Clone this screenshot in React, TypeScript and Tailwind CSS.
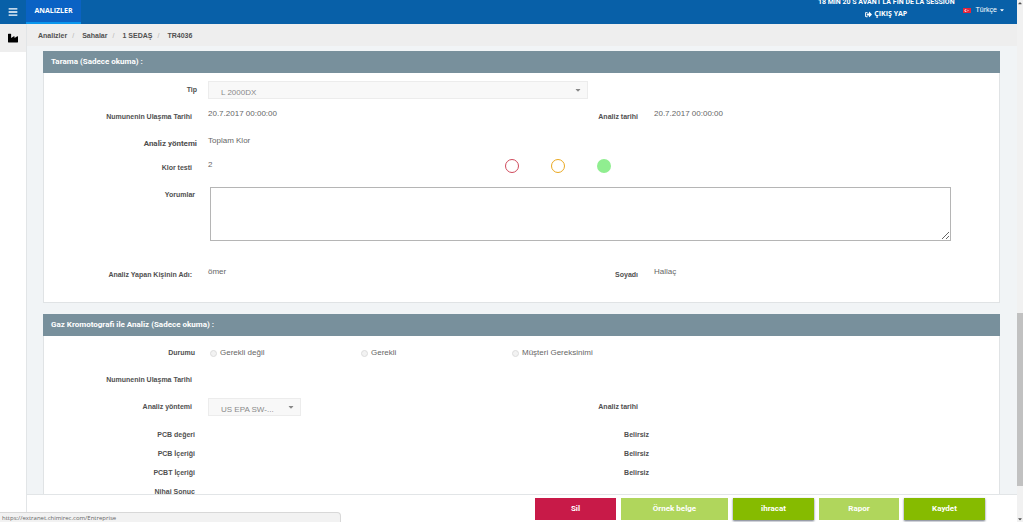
import type { ReactNode } from "react";
import { FaBars, FaCaretDown, FaCaretUp, FaIndustry, FaSignOutAlt } from "react-icons/fa";

const crumbs = ["Analizler", "Sahalar", "1 SEDAŞ", "TR4036"];

const actions = [
  { label: "Sil", style: "w-[81px] bg-[#c81a48]" },
  { label: "Örnek belge", style: "w-[107px] bg-[#b0d65c]" },
  { label: "ihracat", style: "w-[81px] bg-[#86bb00] shadow-xs shadow-gray-500" },
  { label: "Rapor", style: "w-20 bg-[#b0d65c]" },
  { label: "Kaydet", style: "w-[81px] bg-[#86bb00] shadow-xs shadow-gray-500" },
];

const labelBase = "block whitespace-nowrap pt-2 text-right font-bold leading-3 text-[#505050]";

function Row({ className, children }: { className: string; children: ReactNode }) {
  return (
    <div className={`grid grid-cols-[164fr_380fr_66fr_345fr] items-start ${className}`}>{children}</div>
  );
}

function Value({ children }: { children?: ReactNode }) {
  return <span className="pt-[5px] text-[8px] leading-3">{children}</span>;
}

function Panel({ title, className, children }: { title: string; className: string; children: ReactNode }) {
  return (
    <section className={`flex flex-col ${className}`}>
      <h2 className="h-[22px] shrink-0 bg-[#78909c] pl-2 font-['Roboto',Arial,sans-serif] text-[8px] font-bold leading-[22px] text-white">
        {title}
      </h2>
      <div className="flex-1 border border-t-0 border-[#e0e3e5] bg-white pt-[3px]">{children}</div>
    </section>
  );
}

function Picker({ id, text, width }: { id: string; text: string; width: string }) {
  return (
    <div className={`relative mt-[5px] ${width}`}>
      <select
        id={id}
        disabled
        className="block h-[18px] w-full appearance-none border border-[#ececec] bg-[#f8f8f8] pl-3 pt-[5px] text-[8px] leading-3 text-[#8a8a8a] opacity-100"
      >
        <option>{text}</option>
      </select>
      <FaCaretDown className="pointer-events-none absolute right-[6px] top-[5px] size-2 text-[#888]" />
    </div>
  );
}

function Status({ id, text }: { id: string; text: string }) {
  return (
    <label htmlFor={id} className="flex w-[151px] shrink-0 items-center gap-[3px] pl-[2px] text-[8px] leading-3">
      <input
        id={id}
        type="radio"
        name="durum"
        disabled
        className="size-[7px] appearance-none rounded-full border border-[#dcdcdc] bg-[#f2f2f2]"
      />
      {text}
    </label>
  );
}

export default function App() {
  return (
    <div className="relative flex h-screen overflow-hidden bg-[#f1f4f6] font-['Liberation_Sans',Arial,sans-serif] text-[7px] text-[#666]">
      <div className="flex min-w-0 flex-1 flex-col">
        <header className="flex h-6 shrink-0 bg-[#0860a8] text-white">
          <button aria-label="Menü" className="flex w-[26px] items-center justify-center">
            <FaBars className="size-[10px]" />
          </button>
          <a
            href="#analizler"
            className="flex w-[55px] items-center justify-center border-b-2 border-[#0a96ec] bg-[#0a62c4] font-['Open_Sans',sans-serif] font-bold"
          >
            ANALIZLER
          </a>
          <div className="flex flex-1 justify-end pr-3">
            <div className="-mt-1 flex flex-col items-center whitespace-nowrap font-bold leading-3">
              <span className="font-['Roboto',sans-serif]">18 MIN 20 S AVANT LA FIN DE LA SESSION</span>
              <a href="#cikis" className="flex items-center gap-[2px] font-['Open_Sans',sans-serif]">
                <FaSignOutAlt className="size-[7px]" />
                ÇIKIŞ YAP
              </a>
            </div>
            <button className="ml-2 flex h-5 items-center">
              <svg viewBox="0 0 16 10" className="h-[5px] w-2">
                <rect width="16" height="10" fill="#e5243b" />
                <circle cx="6" cy="5" r="3" fill="#fff" />
                <circle cx="7" cy="5" r="2.3" fill="#e5243b" />
                <path d="M8.5 5l3-1.2-.8 1.2.8 1.2z" fill="#fff" />
              </svg>
              <span className="ml-[5px]">Türkçe</span>
              <FaCaretDown className="ml-[2px] size-[6px]" />
            </button>
          </div>
        </header>

        <div className="flex min-h-0 flex-1">
          <aside className="w-[27px] shrink-0 border-r border-[#e2e5e7] bg-white">
            <a
              href="#sahalar"
              aria-label="Sahalar"
              className="flex h-7 items-center justify-center bg-[#eeeeee] text-black"
            >
              <FaIndustry className="size-[10px]" />
            </a>
          </aside>

          <div className="flex min-w-0 flex-1 flex-col">
            <nav className="flex h-[22px] shrink-0 items-center bg-[#eeeeee] pl-[11px] pt-[2px] font-bold text-[#505050]">
              {crumbs.map((crumb, i) => (
                <span key={crumb} className="flex">
                  {i > 0 && <span className="w-[15px] pl-[5px] font-normal text-[#b5b5b5]">/</span>}
                  <a href={`#${i}`}>{crumb}</a>
                </span>
              ))}
            </nav>

            <main className="flex min-h-0 flex-1 flex-col gap-[11px] overflow-hidden pl-4 pr-[17px] pt-[5px]">
              <Panel title="Tarama (Sadece okuma) :" className="shrink-0">
                <Row className="h-[27px]">
                  <label htmlFor="tip" className={`${labelBase} pr-[11px]`}>Tip</label>
                  <Picker id="tip" text="L 2000DX" width="w-full" />
                </Row>
                <Row className="h-[27px]">
                  <span className={`${labelBase} pr-4`}>Numunenin Ulaşma Tarihi</span>
                  <Value>20.7.2017 00:00:00</Value>
                  <span className={`${labelBase} pr-4`}>Analiz tarihi</span>
                  <Value>20.7.2017 00:00:00</Value>
                </Row>
                <Row className="h-6">
                  <span className={`${labelBase} pr-[11px] font-['Roboto',Arial,sans-serif] text-[8px]`}>
                    Analiz yöntemi
                  </span>
                  <Value>Toplam Klor</Value>
                </Row>
                <Row className="h-[27px]">
                  <span className={`${labelBase} pr-4`}>Klor testi</span>
                  <Value>2</Value>
                  <div className="col-span-2 -ml-[83px] flex gap-8 pt-[5px]">
                    <span className="size-[14px] rounded-full border border-[#d04a5c]" />
                    <span className="size-[14px] rounded-full border border-[#eaa820]" />
                    <span className="size-[14px] rounded-full bg-[#90ee90]" />
                  </div>
                </Row>
                <Row className="h-20">
                  <label htmlFor="yorumlar" className={`${labelBase} pr-[13px]`}>Yorumlar</label>
                  <div className="col-span-3 pl-[2px] pr-12 pt-[6px]">
                    <textarea id="yorumlar" className="block h-[54px] w-full border border-[#b5b5b5] bg-white" />
                  </div>
                </Row>
                <Row className="h-[41px]">
                  <span className={`${labelBase} pr-4`}>Analiz Yapan Kişinin Adı:</span>
                  <Value>ömer</Value>
                  <span className={`${labelBase} pr-4`}>Soyadı</span>
                  <Value>Hallaç</Value>
                </Row>
              </Panel>

              <Panel title="Gaz Kromotografi ile Analiz (Sadece okuma) :" className="flex-1">
                <Row className="h-[27px]">
                  <span className={`${labelBase} pr-[13px]`}>Durumu</span>
                  <div className="col-span-3 flex pt-2">
                    <Status id="gerekli-degil" text="Gerekli değil" />
                    <Status id="gerekli" text="Gerekli" />
                    <Status id="musteri" text="Müşteri Gereksinimi" />
                  </div>
                </Row>
                <Row className="h-[27px]">
                  <span className={`${labelBase} pr-4`}>Numunenin Ulaşma Tarihi</span>
                </Row>
                <Row className="h-7">
                  <label htmlFor="yontem" className={`${labelBase} pr-4`}>Analiz yöntemi</label>
                  <Picker id="yontem" text="US EPA SW-..." width="w-[93px]" />
                  <span className={`${labelBase} pr-4`}>Analiz tarihi</span>
                </Row>
                {["PCB değeri", "PCB İçeriği", "PCBT İçeriği"].map((name) => (
                  <Row key={name} className="h-[19px]">
                    <span className={`${labelBase} pr-[13px]`}>{name}</span>
                    <span />
                    <span className={`${labelBase} pr-[5px]`}>Belirsiz</span>
                  </Row>
                ))}
                <Row className="h-[17px] overflow-hidden">
                  <span className={`${labelBase} pr-[13px]`}>Nihai Sonuç</span>
                </Row>
              </Panel>
            </main>

            <footer className="flex h-7 shrink-0 items-start justify-end gap-[5px] border-t border-[#e2e5e7] bg-white pr-8 pt-[3px]">
              {actions.map(({ label, style }) => (
                <button
                  key={label}
                  className={`h-[22px] font-['Roboto',Arial,sans-serif] text-[8px] font-bold text-white ${style}`}
                >
                  {label}
                </button>
              ))}
            </footer>
          </div>
        </div>
      </div>

      <div className="flex w-[6px] shrink-0 flex-col items-center justify-between bg-[#f1f1f1]">
        <FaCaretUp className="size-[6px] text-[#505050]" />
        <div className="mb-[30px] mt-auto h-[173px] w-full bg-[#c1c1c1]" />
        <FaCaretDown className="size-[6px] text-[#505050]" />
      </div>

      <div className="absolute bottom-0 left-0 h-[10px] w-[341px] rounded-tr-sm border-r border-t border-[#d8d8d8] bg-[#f2f2f2] pl-[2px] font-['Open_Sans',sans-serif] text-[6px] leading-[10px]">
        https://extranet.chimirec.com/Entreprise
      </div>
    </div>
  );
}
